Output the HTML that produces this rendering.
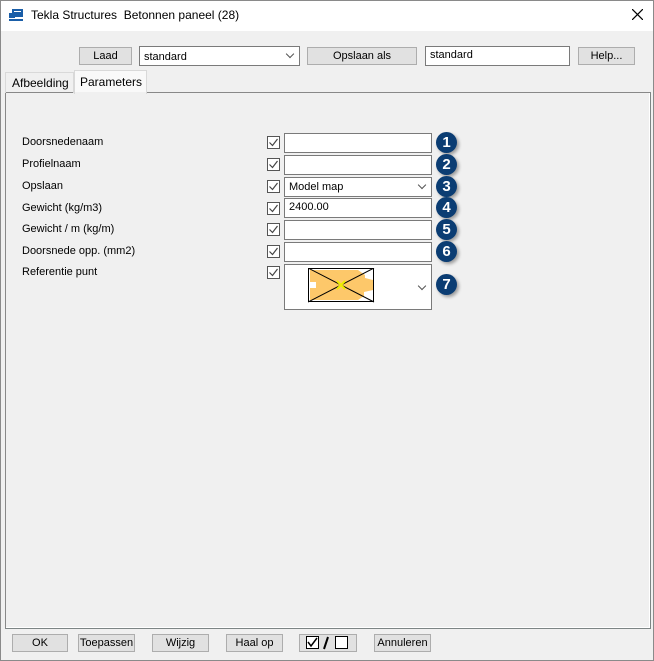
<!DOCTYPE html>
<html><head><style>
*{box-sizing:border-box;margin:0;padding:0}
body{width:654px;height:661px;overflow:hidden;background:#f0f0f0;font-family:"Liberation Sans",sans-serif;font-size:11px;color:#000;position:relative}
.a{position:absolute}
.win{left:0;top:0;width:654px;height:661px;border:1px solid #8a8a8a}
.title{left:1px;top:1px;width:652px;height:30px;background:#fff}
.btn{position:absolute;background:#e1e1e1;border:1px solid #adadad;text-align:center;line-height:17px;font-size:11px}
.fld{position:absolute;background:#fff;border:1px solid #7a7a7a;padding-left:4px;font-size:11px;line-height:19px}
.lbl{position:absolute;left:22px;font-size:11px}
.cb{position:absolute;left:267px;width:13px;height:13px;border:1px solid #555;background:#fff}
.cb svg{position:absolute;left:0px;top:0px}
.num{position:absolute;left:436px;width:21px;height:21px;border-radius:50%;background:#0b3d73;color:#fff;font-weight:bold;font-size:15px;text-align:center;line-height:21px;box-shadow:2px 2px 3px rgba(0,0,0,.35)}
.chev{position:absolute;width:6px;height:6px;border-right:1px solid #555;border-bottom:1px solid #555;transform:rotate(45deg)}
</style></head><body>
<div class="a win"></div>
<div class="a title"></div>
<svg class="a" style="left:9px;top:9px" width="15" height="13"><rect x="3" y="0" width="11" height="8" fill="#1a5ea8"/><rect x="0" y="4" width="6" height="5" fill="#1a5ea8"/><rect x="0" y="10" width="14" height="2" fill="#1a5ea8"/><rect x="5" y="2" width="7" height="1" fill="#fff"/></svg>
<div class="a" style="left:31px;top:8px;font-size:12px">Tekla Structures&nbsp; Betonnen paneel (28)</div>
<svg class="a" style="left:632px;top:9px" width="11" height="11"><path d="M0 0L11 11M11 0L0 11" stroke="#000" stroke-width="1.2"/></svg>

<div class="btn" style="left:79px;top:47px;width:53px;height:18px">Laad</div>
<div class="fld" style="left:139px;top:46px;width:161px;height:20px;line-height:21px">standard</div>
<div class="chev" style="left:287px;top:51px"></div>
<div class="btn" style="left:307px;top:47px;width:110px;height:18px">Opslaan als</div>
<div class="fld" style="left:425px;top:46px;width:145px;height:20px;line-height:17px">standard</div>
<div class="btn" style="left:578px;top:47px;width:57px;height:18px">Help...</div>

<div class="a" style="left:5px;top:92px;width:646px;height:537px;border:1px solid #888;border-right-color:#7d8585;border-bottom-color:#7d8585;box-shadow:inset -1px -1px 0 #fff"></div>
<div class="a" style="left:5px;top:72px;width:69px;height:21px;border:1px solid #d9d9d9;border-bottom:none;padding:3px 0 0 6px;font-size:12px">Afbeelding</div>
<div class="a" style="left:74px;top:70px;width:73px;height:24px;border:1px solid #d9d9d9;border-bottom:none;padding:4px 0 0 5px;font-size:12px;background:#f9f9f9">Parameters</div>
<div class="a" style="left:75px;top:92px;width:71px;height:2px;background:#f0f0f0"></div>

<div class="lbl" style="top:136px">Doorsnedenaam</div>
<div class="lbl" style="top:158px">Profielnaam</div>
<div class="lbl" style="top:180px">Opslaan</div>
<div class="lbl" style="top:202px">Gewicht (kg/m3)</div>
<div class="lbl" style="top:223px">Gewicht / m (kg/m)</div>
<div class="lbl" style="top:245px">Doorsnede opp. (mm2)</div>
<div class="lbl" style="top:266px">Referentie punt</div>

<div class="cb" style="top:136px"><svg width="11" height="11"><path d="M1.5 5.5L4.5 8.5L9.5 2" stroke="#444" fill="none" stroke-width="1.2"/></svg></div>
<div class="cb" style="top:158px"><svg width="11" height="11"><path d="M1.5 5.5L4.5 8.5L9.5 2" stroke="#444" fill="none" stroke-width="1.2"/></svg></div>
<div class="cb" style="top:180px"><svg width="11" height="11"><path d="M1.5 5.5L4.5 8.5L9.5 2" stroke="#444" fill="none" stroke-width="1.2"/></svg></div>
<div class="cb" style="top:202px"><svg width="11" height="11"><path d="M1.5 5.5L4.5 8.5L9.5 2" stroke="#444" fill="none" stroke-width="1.2"/></svg></div>
<div class="cb" style="top:223px"><svg width="11" height="11"><path d="M1.5 5.5L4.5 8.5L9.5 2" stroke="#444" fill="none" stroke-width="1.2"/></svg></div>
<div class="cb" style="top:245px"><svg width="11" height="11"><path d="M1.5 5.5L4.5 8.5L9.5 2" stroke="#444" fill="none" stroke-width="1.2"/></svg></div>
<div class="cb" style="top:266px"><svg width="11" height="11"><path d="M1.5 5.5L4.5 8.5L9.5 2" stroke="#444" fill="none" stroke-width="1.2"/></svg></div>

<div class="fld" style="left:284px;top:133px;width:148px;height:20px"></div>
<div class="fld" style="left:284px;top:155px;width:148px;height:20px"></div>
<div class="fld" style="left:284px;top:177px;width:148px;height:20px">Model map</div>
<div class="chev" style="left:419px;top:182px"></div>
<div class="fld" style="left:284px;top:198px;width:148px;height:20px;line-height:17px">2400.00</div>
<div class="fld" style="left:284px;top:220px;width:148px;height:20px"></div>
<div class="fld" style="left:284px;top:242px;width:148px;height:20px"></div>
<div class="fld" style="left:284px;top:264px;width:148px;height:46px"></div>
<div class="chev" style="left:419px;top:283px"></div>
<svg class="a" style="left:308px;top:268px" width="67" height="35"><rect x="0.5" y="0.5" width="65" height="33" fill="#fff" stroke="#000"/><path d="M2 2H50L57 7V10L65 12V22L56 24V28L50 32H2V20L8 20V14L2 14Z" fill="#fdc86a"/><path d="M0 0L66 34M66 0L0 34" stroke="#000" stroke-width="1"/><rect x="0.5" y="0.5" width="65" height="33" fill="none" stroke="#000"/><path d="M29 13L37 21M37 13L29 21" stroke="#ee0" stroke-width="2"/></svg>

<div class="num" style="top:132px">1</div>
<div class="num" style="top:154px">2</div>
<div class="num" style="top:176px">3</div>
<div class="num" style="top:197px">4</div>
<div class="num" style="top:219px">5</div>
<div class="num" style="top:241px">6</div>
<div class="num" style="top:274px">7</div>

<div class="btn" style="left:12px;top:634px;width:56px;height:18px">OK</div>
<div class="btn" style="left:78px;top:634px;width:57px;height:18px">Toepassen</div>
<div class="btn" style="left:152px;top:634px;width:57px;height:18px">Wijzig</div>
<div class="btn" style="left:226px;top:634px;width:57px;height:18px">Haal op</div>
<div class="btn" style="left:299px;top:634px;width:58px;height:18px"></div>
<svg class="a" style="left:306px;top:636px" width="46" height="14"><rect x="0.5" y="0.5" width="12" height="12" fill="#fff" stroke="#000"/><path d="M2 6L5 10L11 2" stroke="#000" fill="none" stroke-width="1.5"/><path d="M18 13L22 1" stroke="#000" stroke-width="2"/><rect x="29.5" y="0.5" width="12" height="12" fill="#fff" stroke="#000"/></svg>
<div class="btn" style="left:374px;top:634px;width:57px;height:18px">Annuleren</div>
</body></html>
